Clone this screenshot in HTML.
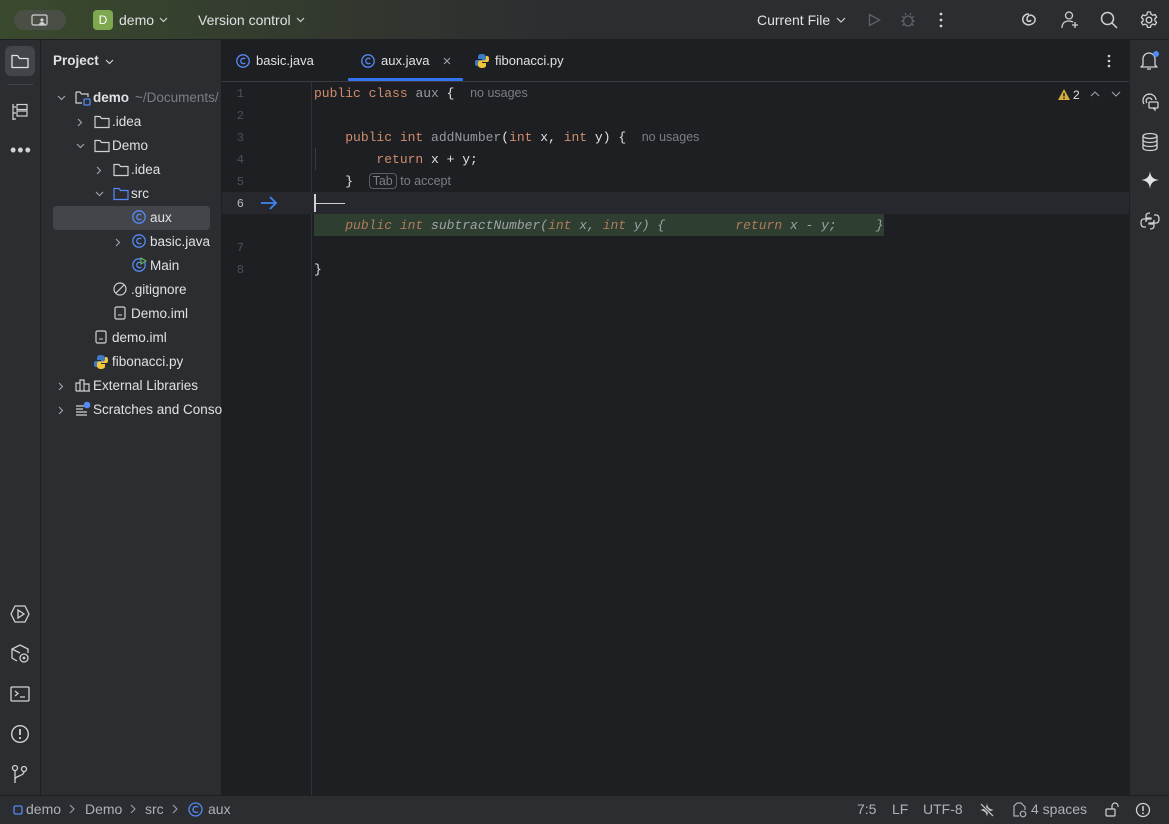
<!DOCTYPE html>
<html><head><meta charset="utf-8"><style>
*{box-sizing:border-box;margin:0;padding:0}
body{width:1169px;height:824px;overflow:hidden;background:#1e1f22;font-family:"Liberation Sans",sans-serif;font-size:13px;color:#dfe1e5;position:relative}
.abs{position:absolute}
.top{left:0;top:0;width:1169px;height:40px;background:linear-gradient(90deg,#3a4a2e 0%,#333a2e 25%,#2b2d30 50%);border-bottom:1px solid #1e1f22}
.lstrip{left:0;top:40px;width:41px;height:755px;background:#2b2d30;border-right:1px solid #1e1f22}
.proj{left:41px;top:40px;width:181px;height:755px;background:#2b2d30;border-right:1px solid #1e1f22}
.rstrip{left:1129px;top:40px;width:40px;height:755px;background:#2b2d30;border-left:1px solid #1e1f22}
.status{left:0;top:795px;width:1169px;height:29px;background:#2b2d30;border-top:1px solid #1e1f22;color:#aeb1b7}
.tabs{left:222px;top:40px;width:907px;height:42px;border-bottom:1px solid #393b40;background:#1e1f22}
.t{position:absolute;white-space:nowrap}
svg{position:absolute;overflow:visible}
.code{font-family:"Liberation Mono",monospace;font-size:13px;white-space:pre;position:absolute;left:314px}
.kw{color:#cf8e6d}.fn{color:#969aa0}.hint{font-family:"Liberation Sans",sans-serif;color:#7a7e85;font-size:12.5px}
.ln{position:absolute;left:222px;width:22px;text-align:right;font-family:"Liberation Mono",monospace;font-size:12px;color:#4b5059}
.tree .t{font-size:13.5px}
</style></head><body>
<div class="abs top">
 <div class="abs" style="left:14px;top:10px;width:52px;height:20px;border-radius:10px;background:#4a4f45"></div>
 <svg style="left:31px;top:14px" width="18" height="12"><rect x="1" y="1" width="15" height="10" rx="1.5" fill="none" stroke="#cfd1d4" stroke-width="1.2"/><circle cx="11" cy="6" r="1.6" fill="#cfd1d4"/><path d="M8 11a3 3 0 0 1 6 0" fill="#cfd1d4"/></svg>
 <div class="abs" style="left:93px;top:10px;width:20px;height:20px;border-radius:4px;background:#7da84f;color:#fff;text-align:center;line-height:20px;font-size:12px">D</div>
 <div class="t" style="left:119px;top:12px;font-size:14px">demo</div>
 <svg style="left:159px;top:17px" width="9" height="6"><path d="M1 1l3.5 3.5L8 1" fill="none" stroke="#cfd1d4" stroke-width="1.2"/></svg>
 <div class="t" style="left:198px;top:12px;font-size:14px">Version control</div>
 <svg style="left:296px;top:17px" width="9" height="6"><path d="M1 1l3.5 3.5L8 1" fill="none" stroke="#cfd1d4" stroke-width="1.2"/></svg>
 <div class="t" style="left:757px;top:12px;font-size:14px">Current File</div>
 <svg style="left:836px;top:17px" width="10" height="6"><path d="M1 1l4 4 4-4" fill="none" stroke="#cfd1d4" stroke-width="1.2"/></svg>
 <svg style="left:868px;top:13px" width="14" height="14"><path d="M1.5 1.5v11l10-5.5z" fill="none" stroke="#5f6368" stroke-width="1.3"/></svg>
 <svg style="left:900px;top:12px" width="16" height="16"><ellipse cx="8" cy="9" rx="4.5" ry="5" fill="none" stroke="#5f6368" stroke-width="1.3"/><path d="M1 9h2.5M12.5 9H15M2 4l2 2M14 4l-2 2M2 14l2-2M14 14l-2-2M6 3l-1-2M10 3l1-2" stroke="#5f6368" stroke-width="1.2"/></svg>
 <svg style="left:939px;top:12px" width="4" height="16"><circle cx="2" cy="2" r="1.4" fill="#cfd1d4"/><circle cx="2" cy="8" r="1.4" fill="#cfd1d4"/><circle cx="2" cy="14" r="1.4" fill="#cfd1d4"/></svg>
 <svg style="left:1020px;top:11px" width="18" height="18"><path d="M9 3C4 3 2 7 3 10s5 5 9 3 4-6 1-8-6 0-6 3 3 3 4 1" fill="none" stroke="#cfd1d4" stroke-width="1.5"/></svg>
 <svg style="left:1060px;top:10px" width="20" height="20"><circle cx="9" cy="5.5" r="3.5" fill="none" stroke="#cfd1d4" stroke-width="1.3"/><path d="M2 18c0-5 3-7 7-7 2 0 3 .5 4 1M15 12v6M12 15h6" fill="none" stroke="#cfd1d4" stroke-width="1.3"/></svg>
 <svg style="left:1100px;top:11px" width="18" height="18"><circle cx="7.5" cy="7.5" r="6" fill="none" stroke="#cfd1d4" stroke-width="1.5"/><path d="M12 12l5 5" stroke="#cfd1d4" stroke-width="1.5"/></svg>
 <svg style="left:1140px;top:11px" width="18" height="18"><circle cx="9" cy="9" r="2.8" fill="none" stroke="#cfd1d4" stroke-width="1.4"/><path d="M7.5 1h3l.5 2.2 2 1.1 2.1-.8 1.5 2.6-1.7 1.5v2.2l1.7 1.5-1.5 2.6-2.1-.8-2 1.1-.5 2.2h-3l-.5-2.2-2-1.1-2.1.8-1.5-2.6L3.1 10V8L1.4 6.5l1.5-2.6 2.1.8 2-1.1z" fill="none" stroke="#cfd1d4" stroke-width="1.3" stroke-linejoin="round"/></svg>
</div>

<div class="abs lstrip">
 <div class="abs" style="left:5px;top:6px;width:30px;height:30px;border-radius:6px;background:#43454a"></div>
 <svg style="left:11px;top:14px" width="18" height="15"><path d="M1 2.5V13.5h16V4.5H8.5L6.5 1.5H1z" fill="none" stroke="#dfe1e5" stroke-width="1.3" stroke-linejoin="round"/></svg>
 <div class="abs" style="left:8px;top:44px;width:25px;height:1px;background:#43454a"></div>
 <svg style="left:12px;top:63px" width="16" height="18"><path d="M1 1v16M1 4h3M1 10h3M1 16h3" stroke="#cfd1d4" stroke-width="1.2" fill="none"/><rect x="5" y="1.5" width="10" height="5" fill="none" stroke="#cfd1d4" stroke-width="1.2"/><rect x="5" y="8" width="10" height="5" fill="none" stroke="#cfd1d4" stroke-width="1.2"/></svg>
 <div class="t" style="left:10px;top:100px;color:#cfd1d4;font-size:18px;letter-spacing:1px">•••</div>
 <svg style="left:10px;top:565px" width="20" height="18"><path d="M5 1h10l4 8-4 8H5L1 9z" fill="none" stroke="#cfd1d4" stroke-width="1.3"/><path d="M8 5v8l6-4z" fill="none" stroke="#cfd1d4" stroke-width="1.3"/></svg>
 <svg style="left:10px;top:604px" width="20" height="20"><path d="M10 1l8 4v4M10 1L2 5v9l5 3M2 5l8 4" fill="none" stroke="#cfd1d4" stroke-width="1.3"/><circle cx="14" cy="14" r="4" fill="none" stroke="#cfd1d4" stroke-width="1.3"/><circle cx="14" cy="14" r="1.4" fill="#cfd1d4"/></svg>
 <svg style="left:10px;top:646px" width="20" height="16"><rect x="1" y="1" width="18" height="14" rx="1" fill="none" stroke="#cfd1d4" stroke-width="1.3"/><path d="M5 5l3 2.5L5 10M10 11h5" fill="none" stroke="#cfd1d4" stroke-width="1.3"/></svg>
 <svg style="left:10px;top:684px" width="20" height="20"><circle cx="10" cy="10" r="8.3" fill="none" stroke="#cfd1d4" stroke-width="1.4"/><path d="M10 5v6" stroke="#cfd1d4" stroke-width="1.8"/><circle cx="10" cy="14" r="1.1" fill="#cfd1d4"/></svg>
 <svg style="left:11px;top:724px" width="18" height="20"><circle cx="4" cy="4" r="2.5" fill="none" stroke="#cfd1d4" stroke-width="1.3"/><circle cx="13" cy="5" r="2.5" fill="none" stroke="#cfd1d4" stroke-width="1.3"/><path d="M4 6.5V19M13 7.5c0 5-9 4-9 8" fill="none" stroke="#cfd1d4" stroke-width="1.3"/></svg>
</div>

<div class="abs proj tree">
 <div class="t" style="left:12px;top:13px;font-weight:bold;font-size:13.5px">Project</div>
 <svg style="left:64px;top:19px" width="9" height="6"><path d="M1 1l3.5 3.5L8 1" fill="none" stroke="#cfd1d4" stroke-width="1.2"/></svg>
 <div class="abs" style="left:12px;top:166px;width:157px;height:24px;border-radius:4px;background:#43454a"></div>
</div>
<div class="tree">
<svg style="left:57px;top:95px" width="9" height="6"><path d="M1 1l3.5 3.5L8 1" fill="none" stroke="#9da0a8" stroke-width="1.2"/></svg>
<svg style="left:75px;top:90px" width="16" height="16"><path d="M1 2h4l1.5 2H13v3M1 2v11h6" fill="none" stroke="#cfd1d4" stroke-width="1.2"/><rect x="9" y="9" width="6" height="6" rx="1" fill="none" stroke="#548af7" stroke-width="1.3"/></svg>
<div class="t" style="left:93px;top:90px;font-weight:bold">demo</div>
<div class="t" style="left:135px;top:90px;color:#7a7e85">~/Documents/</div>

<svg style="left:77px;top:118px" width="6" height="9"><path d="M1 1l3.5 3.5L1 8" fill="none" stroke="#9da0a8" stroke-width="1.2"/></svg>
<svg style="left:94px;top:115px" width="16" height="14"><path d="M1 1.5V12.5h14V3.5H7.5L6 1.5z" fill="none" stroke="#cfd1d4" stroke-width="1.2"/></svg>
<div class="t" style="left:112px;top:114px">.idea</div>

<svg style="left:76px;top:143px" width="9" height="6"><path d="M1 1l3.5 3.5L8 1" fill="none" stroke="#9da0a8" stroke-width="1.2"/></svg>
<svg style="left:94px;top:139px" width="16" height="14"><path d="M1 1.5V12.5h14V3.5H7.5L6 1.5z" fill="none" stroke="#cfd1d4" stroke-width="1.2"/></svg>
<div class="t" style="left:112px;top:138px">Demo</div>

<svg style="left:96px;top:166px" width="6" height="9"><path d="M1 1l3.5 3.5L1 8" fill="none" stroke="#9da0a8" stroke-width="1.2"/></svg>
<svg style="left:113px;top:163px" width="16" height="14"><path d="M1 1.5V12.5h14V3.5H7.5L6 1.5z" fill="none" stroke="#cfd1d4" stroke-width="1.2"/></svg>
<div class="t" style="left:131px;top:162px">.idea</div>

<svg style="left:95px;top:191px" width="9" height="6"><path d="M1 1l3.5 3.5L8 1" fill="none" stroke="#9da0a8" stroke-width="1.2"/></svg>
<svg style="left:113px;top:187px" width="16" height="14"><path d="M1 1.5V12.5h14V3.5H7.5L6 1.5z" fill="none" stroke="#548af7" stroke-width="1.2"/></svg>
<div class="t" style="left:131px;top:186px">src</div>

<svg style="left:132px;top:210px" width="14" height="14"><circle cx="7" cy="7" r="6.2" fill="none" stroke="#548af7" stroke-width="1.3"/><path d="M9.3 5A2.7 2.7 0 1 0 9.3 9" fill="none" stroke="#548af7" stroke-width="1.3"/></svg>
<div class="t" style="left:150px;top:210px">aux</div>

<svg style="left:115px;top:238px" width="6" height="9"><path d="M1 1l3.5 3.5L1 8" fill="none" stroke="#9da0a8" stroke-width="1.2"/></svg>
<svg style="left:132px;top:234px" width="14" height="14"><circle cx="7" cy="7" r="6.2" fill="none" stroke="#548af7" stroke-width="1.3"/><path d="M9.3 5A2.7 2.7 0 1 0 9.3 9" fill="none" stroke="#548af7" stroke-width="1.3"/></svg>
<div class="t" style="left:150px;top:234px">basic.java</div>

<svg style="left:132px;top:258px" width="16" height="14"><circle cx="7" cy="7" r="6.2" fill="none" stroke="#548af7" stroke-width="1.3"/><path d="M9.3 5A2.7 2.7 0 1 0 9.3 9" fill="none" stroke="#548af7" stroke-width="1.3"/><path d="M9 0v6l5-3z" fill="#2b2d30" stroke="#5fb865" stroke-width="1.1"/></svg>
<div class="t" style="left:150px;top:258px">Main</div>

<svg style="left:113px;top:282px" width="14" height="14"><circle cx="7" cy="7" r="6" fill="none" stroke="#cfd1d4" stroke-width="1.2"/><path d="M3 11L11 3" stroke="#cfd1d4" stroke-width="1.2"/></svg>
<div class="t" style="left:131px;top:282px">.gitignore</div>

<svg style="left:114px;top:306px" width="12" height="14"><rect x="1" y="1" width="10" height="12" rx="1.5" fill="none" stroke="#cfd1d4" stroke-width="1.2"/><path d="M4 9h4" stroke="#cfd1d4"/></svg>
<div class="t" style="left:131px;top:306px">Demo.iml</div>

<svg style="left:95px;top:330px" width="12" height="14"><rect x="1" y="1" width="10" height="12" rx="1.5" fill="none" stroke="#cfd1d4" stroke-width="1.2"/><path d="M4 9h4" stroke="#cfd1d4"/></svg>
<div class="t" style="left:112px;top:330px">demo.iml</div>

<svg style="left:93px;top:354px" width="16" height="16"><path d="M8 1C4 1 4 3 4 4v2h4v1H2.5C1 7 1 9 1 10s0 3 2 3h1v-2c0-1.5 1-2.5 2.5-2.5H10c1 0 2-1 2-2V4c0-2-2-3-4-3z" fill="#3d7bc4"/><path d="M8 15c4 0 4-2 4-3v-2H8V9h5.5c1.5 0 1.5-2 1.5-3s0-3-2-3h-1v2c0 1.5-1 2.5-2.5 2.5H6c-1 0-2 1-2 2V12c0 2 2 3 4 3z" fill="#f0c53a"/></svg>
<div class="t" style="left:112px;top:354px">fibonacci.py</div>

<svg style="left:58px;top:382px" width="6" height="9"><path d="M1 1l3.5 3.5L1 8" fill="none" stroke="#9da0a8" stroke-width="1.2"/></svg>
<svg style="left:75px;top:378px" width="16" height="14"><path d="M1 13V5h4v8M5 13V2h4v11M9 13V6h5v7zM1 13h14" fill="none" stroke="#cfd1d4" stroke-width="1.2"/></svg>
<div class="t" style="left:93px;top:378px">External Libraries</div>

<svg style="left:58px;top:406px" width="6" height="9"><path d="M1 1l3.5 3.5L1 8" fill="none" stroke="#9da0a8" stroke-width="1.2"/></svg>
<svg style="left:75px;top:401px" width="16" height="16"><path d="M1 5h8M1 8h7M1 11h11M1 14h11" stroke="#cfd1d4" stroke-width="1.2"/><circle cx="12" cy="4" r="3.3" fill="#548af7"/></svg>
<div class="t" style="left:93px;top:402px;width:129px;overflow:hidden">Scratches and Consoles</div>
</div>

<div class="abs tabs">
 <svg style="left:14px;top:14px" width="14" height="14"><circle cx="7" cy="7" r="6.2" fill="none" stroke="#548af7" stroke-width="1.3"/><path d="M9.3 5A2.7 2.7 0 1 0 9.3 9" fill="none" stroke="#548af7" stroke-width="1.3"/></svg>
 <div class="t" style="left:34px;top:13px">basic.java</div>
 <svg style="left:139px;top:14px" width="14" height="14"><circle cx="7" cy="7" r="6.2" fill="none" stroke="#548af7" stroke-width="1.3"/><path d="M9.3 5A2.7 2.7 0 1 0 9.3 9" fill="none" stroke="#548af7" stroke-width="1.3"/></svg>
 <div class="t" style="left:159px;top:13px">aux.java</div>
 <svg style="left:221px;top:17px" width="8" height="8"><path d="M1 1l6 6M7 1L1 7" stroke="#9da0a8" stroke-width="1.1"/></svg>
 <div class="abs" style="left:126px;top:38px;width:115px;height:3px;background:#3574f0;border-radius:1px"></div>
 <svg style="left:252px;top:13px" width="16" height="16"><path d="M8 1C4 1 4 3 4 4v2h4v1H2.5C1 7 1 9 1 10s0 3 2 3h1v-2c0-1.5 1-2.5 2.5-2.5H10c1 0 2-1 2-2V4c0-2-2-3-4-3z" fill="#3d7bc4"/><path d="M8 15c4 0 4-2 4-3v-2H8V9h5.5c1.5 0 1.5-2 1.5-3s0-3-2-3h-1v2c0 1.5-1 2.5-2.5 2.5H6c-1 0-2 1-2 2V12c0 2 2 3 4 3z" fill="#f0c53a"/></svg>
 <div class="t" style="left:273px;top:13px">fibonacci.py</div>
 <svg style="left:885px;top:14px" width="4" height="14"><circle cx="2" cy="2" r="1.3" fill="#cfd1d4"/><circle cx="2" cy="7" r="1.3" fill="#cfd1d4"/><circle cx="2" cy="12" r="1.3" fill="#cfd1d4"/></svg>
</div>

<div class="abs" style="left:311px;top:82px;width:1px;height:713px;background:#313338"></div>
<div class="abs" style="left:222px;top:192px;width:907px;height:22px;background:#26282e"></div>
<div class="abs" style="left:314px;top:214px;width:570px;height:22px;background:#2e3f31"></div>
<div class="abs" style="left:314px;top:194px;width:1.5px;height:18px;background:#ced0d6"></div>
<div class="abs" style="left:315px;top:203px;width:30px;height:1px;background:#ced0d6"></div>
<div class="abs" style="left:315px;top:148px;width:1px;height:22px;background:#393b40"></div>

<div class="ln" style="top:87px">1</div>
<div class="ln" style="top:109px">2</div>
<div class="ln" style="top:131px">3</div>
<div class="ln" style="top:153px">4</div>
<div class="ln" style="top:175px">5</div>
<div class="ln" style="top:197px;color:#b4b8bf">6</div>
<div class="ln" style="top:241px">7</div>
<div class="ln" style="top:263px">8</div>
<svg style="left:260px;top:196px" width="18" height="14"><path d="M1 7h15M10 1l6 6-6 6" fill="none" stroke="#3d84f5" stroke-width="1.8"/></svg>

<div class="code" style="top:86px"><span class="kw">public class</span> <span class="fn">aux</span> {  <span class="hint">no usages</span></div>
<div class="code" style="top:130px">    <span class="kw">public int</span> <span class="fn">addNumber</span>(<span class="kw">int</span> x, <span class="kw">int</span> y) {  <span class="hint">no usages</span></div>
<div class="code" style="top:152px">        <span class="kw">return</span> x + y;</div>
<div class="code" style="top:174px">    }  <span class="hint" style="border:1px solid #5a5d63;border-radius:4px;padding:0 3px">Tab</span><span class="hint"> to accept</span></div>
<div class="code" style="top:218px;font-style:italic;color:#9fa2a8">    <span style="color:#b07a5c">public int</span> subtractNumber(<span style="color:#b07a5c">int</span> x, <span style="color:#b07a5c">int</span> y) {         <span style="color:#b07a5c">return</span> x - y;     }</div>
<div class="code" style="top:262px">}</div>

<svg style="left:1057px;top:88px" width="14" height="13"><path d="M7 1L13 12H1z" fill="#d6ae3f"/><path d="M7 5v3.5" stroke="#1e1f22" stroke-width="1.5"/><circle cx="7" cy="10.3" r=".8" fill="#1e1f22"/></svg>
<div class="t" style="left:1073px;top:88px;font-size:12px">2</div>
<svg style="left:1090px;top:91px" width="10" height="6"><path d="M1 5l4-4 4 4" fill="none" stroke="#9da0a8" stroke-width="1.1"/></svg>
<svg style="left:1111px;top:91px" width="10" height="6"><path d="M1 1l4 4 4-4" fill="none" stroke="#9da0a8" stroke-width="1.1"/></svg>

<div class="abs rstrip">
 <svg style="left:10px;top:10px" width="20" height="22"><path d="M3 15V9a6 6 0 0 1 12 0v6l2 2H1z" fill="none" stroke="#cfd1d4" stroke-width="1.3" stroke-linejoin="round"/><path d="M7 19h4" stroke="#cfd1d4" stroke-width="1.3"/><circle cx="16" cy="4" r="3" fill="#548af7"/></svg>
 <svg style="left:10px;top:52px" width="20" height="20"><path d="M4 12a6.5 6.5 0 1 1 12-4" fill="none" stroke="#cfd1d4" stroke-width="1.3"/><path d="M7 11a3 3 0 1 1 5-3" fill="none" stroke="#cfd1d4" stroke-width="1.3"/><rect x="9" y="10" width="9" height="6" rx="1" fill="#2b2d30" stroke="#cfd1d4" stroke-width="1.3"/><path d="M15 16v2l-2-2" fill="none" stroke="#cfd1d4" stroke-width="1.2"/></svg>
 <svg style="left:11px;top:92px" width="18" height="20"><ellipse cx="9" cy="4" rx="7" ry="2.5" fill="none" stroke="#cfd1d4" stroke-width="1.3"/><path d="M2 4v12c0 1.5 3 2.5 7 2.5s7-1 7-2.5V4M2 8c0 1.5 3 2.5 7 2.5s7-1 7-2.5M2 12c0 1.5 3 2.5 7 2.5s7-1 7-2.5" fill="none" stroke="#cfd1d4" stroke-width="1.3"/></svg>
 <svg style="left:11px;top:131px" width="18" height="18"><path d="M9 0C9.6 5 11 8 18 9 11 10 9.6 13 9 18 8.4 13 7 10 0 9 7 8 8.4 5 9 0z" fill="#dfe1e5"/></svg>
 <svg style="left:10px;top:171px" width="20" height="20"><path d="M10 2c-3 0-4 1-4 3v2h5v1H4c-2 0-3 1-3 4s1 4 3 4h2M10 18c3 0 4-1 4-3v-2H9v-1h7c2 0 3-1 3-4s-1-4-3-4h-2M6 11v-1c0-1 1-2 2-2M14 9v1c0 1-1 2-2 2" fill="none" stroke="#cfd1d4" stroke-width="1.3"/></svg>
</div>

<div class="abs status">
 <svg style="left:13px;top:9px" width="10" height="10"><rect x="1" y="1" width="8" height="8" rx="1.5" fill="none" stroke="#548af7" stroke-width="1.3"/></svg>
 <div class="t" style="left:26px;top:5px;font-size:14px">demo</div>
 <svg style="left:69px;top:8px" width="6" height="10"><path d="M1 1l4 4-4 4" fill="none" stroke="#9da0a8" stroke-width="1.1"/></svg>
 <div class="t" style="left:85px;top:5px;font-size:14px">Demo</div>
 <svg style="left:130px;top:8px" width="6" height="10"><path d="M1 1l4 4-4 4" fill="none" stroke="#9da0a8" stroke-width="1.1"/></svg>
 <div class="t" style="left:145px;top:5px;font-size:14px">src</div>
 <svg style="left:172px;top:8px" width="6" height="10"><path d="M1 1l4 4-4 4" fill="none" stroke="#9da0a8" stroke-width="1.1"/></svg>
 <svg style="left:188px;top:6px" width="15" height="15"><circle cx="7.5" cy="7.5" r="6.5" fill="none" stroke="#548af7" stroke-width="1.3"/><path d="M10 5.3A3 3 0 1 0 10 9.7" fill="none" stroke="#548af7" stroke-width="1.3"/></svg>
 <div class="t" style="left:208px;top:5px;font-size:14px">aux</div>
 <div class="t" style="left:857px;top:5px;font-size:14px">7:5</div>
 <div class="t" style="left:892px;top:5px;font-size:14px">LF</div>
 <div class="t" style="left:923px;top:5px;font-size:14px">UTF-8</div>
 <svg style="left:979px;top:6px" width="16" height="16"><path d="M8 1C8.4 5 9.5 7 15 8 9.5 9 8.4 11 8 15 7.6 11 6.5 9 1 8 6.5 7 7.6 5 8 1z" fill="#cfd1d4"/><path d="M2 2l12 12" stroke="#2b2d30" stroke-width="3"/><path d="M2 2l12 12" stroke="#cfd1d4" stroke-width="1.2"/></svg>
 <svg style="left:1013px;top:6px" width="14" height="16"><path d="M4 1h4l4 4v3M4 1L1 4v10h5" fill="none" stroke="#aeb1b7" stroke-width="1.2"/><circle cx="10" cy="12" r="2.8" fill="none" stroke="#aeb1b7" stroke-width="1.2"/></svg>
 <div class="t" style="left:1031px;top:5px;font-size:14px">4 spaces</div>
 <svg style="left:1105px;top:6px" width="14" height="15"><rect x="1" y="7" width="9" height="7" rx="1" fill="none" stroke="#cfd1d4" stroke-width="1.2"/><path d="M7 7V4a3 3 0 0 1 6 0v1" fill="none" stroke="#cfd1d4" stroke-width="1.2"/></svg>
 <svg style="left:1135px;top:6px" width="16" height="16"><circle cx="8" cy="8" r="6.5" fill="none" stroke="#cfd1d4" stroke-width="1.3"/><path d="M8 4v5" stroke="#cfd1d4" stroke-width="1.5"/><circle cx="8" cy="11.3" r=".9" fill="#cfd1d4"/></svg>
</div>
</body></html>
